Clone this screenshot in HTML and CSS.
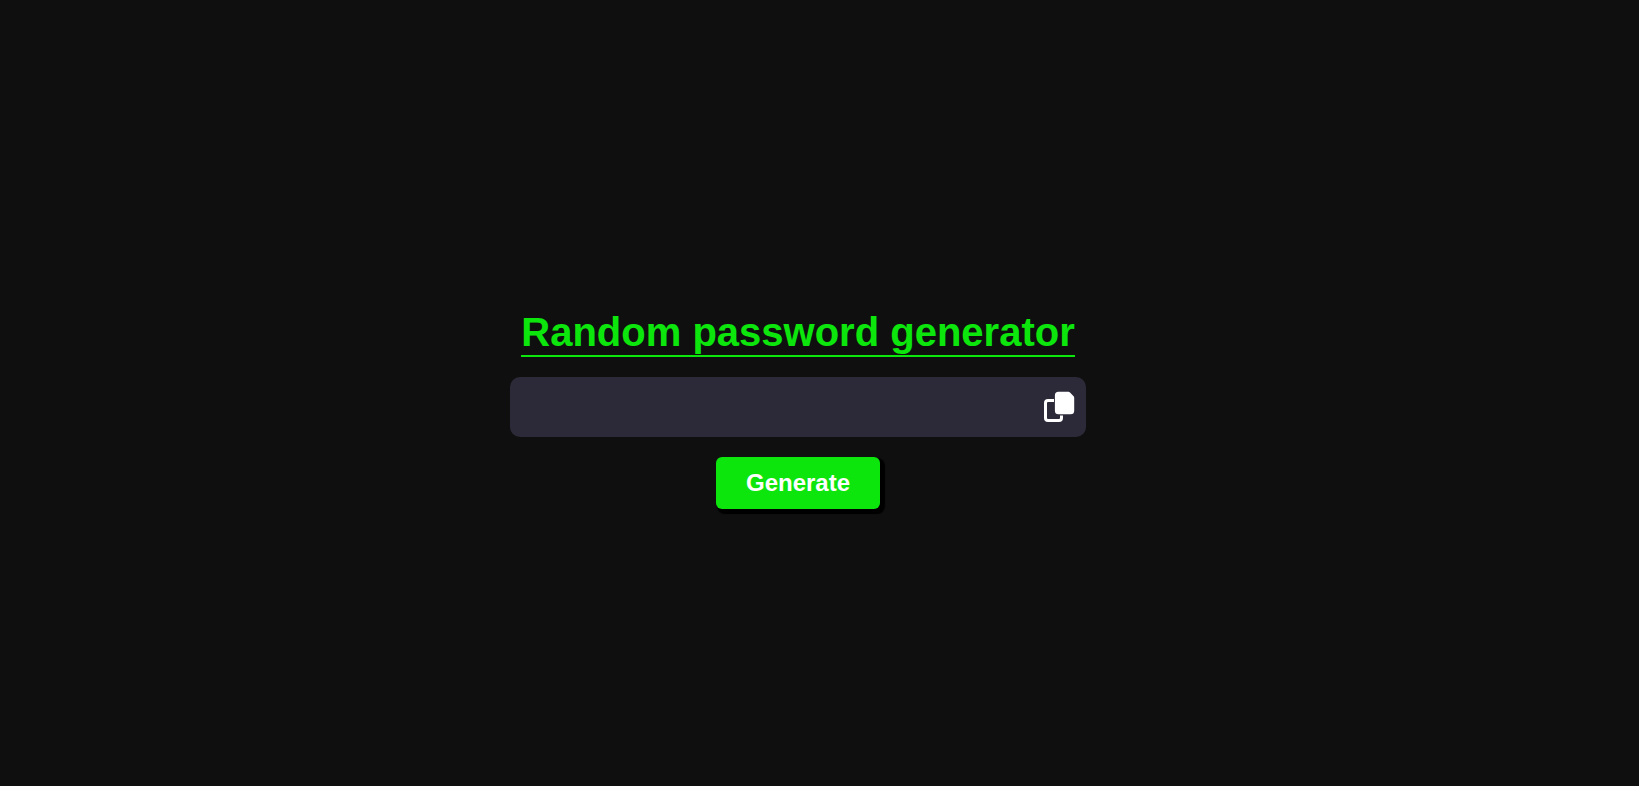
FILE: index.html
```html
<!DOCTYPE html>
<html lang="en">
<head>
<meta charset="utf-8">
<meta name="viewport" content="width=device-width, initial-scale=1">
<title>Random password generator</title>
<link rel="stylesheet" href="styles.css">
</head>
<body>
<main class="generator">
  <h1 class="title">Random password generator</h1>
  <div class="field">
    <input class="password" type="text" aria-label="Generated password" readonly>
    <button class="copy" type="button" aria-label="Copy password">
      <svg class="copy-icon" viewBox="0 0 32 32" aria-hidden="true">
        <path d="M11 9.500H5Q2.500 9.500 2.500 12V27Q2.500 29.500 5 29.500H16Q18.500 29.500 18.500 27V24.500" fill="none" stroke="currentColor" stroke-width="3"/>
        <path d="M15.500 .8H25.500Q26.300 .8 27 1.500L30.400 4.900Q31.200 5.700 31.200 6.700V19.700Q31.200 23.300 27.600 23.300H15.500Q11.900 23.300 11.900 19.700V4.400Q11.900 .8 15.500 .8Z" fill="currentColor"/>
      </svg>
    </button>
  </div>
  <button class="generate" type="button">Generate</button>
</main>
</body>
</html>
```
FILE: styles.css
```css
* {
  box-sizing: border-box;
}

body {
  margin: 0;
  background: #0f0f0f;
  font-family: Arial, "Liberation Sans", sans-serif;
}

.generator {
  display: flex;
  flex-direction: column;
  align-items: center;
  justify-content: center;
  gap: 20px;
  min-height: 100vh;
  padding: 32px 43px 0 0;
}

.title {
  margin: 0;
  border-bottom: 2px solid #0de60d;
  color: #0de60d;
  font-size: 40px;
  line-height: 46px;
}

.field {
  display: flex;
  align-items: center;
  width: 100%;
  max-width: 576px;
  height: 60px;
  padding: 0 11px;
  border-radius: 10px;
  background: #2c2a38;
}

.password {
  flex: 1;
  min-width: 0;
  height: 100%;
  padding: 0;
  border: 0;
  outline: 0;
  background: transparent;
  color: #fff;
  font: 24px Arial, "Liberation Sans", sans-serif;
}

.copy {
  display: flex;
  padding: 0;
  border: 0;
  background: transparent;
  color: #fff;
  cursor: pointer;
}

.copy-icon {
  width: 32px;
  height: 32px;
}

.generate {
  padding: 12px 30px;
  border: 0;
  border-radius: 6px;
  background: #0de60d;
  box-shadow: 3px 3px 1px 2px #000;
  color: #fff;
  font: bold 24px/28px Arial, "Liberation Sans", sans-serif;
  cursor: pointer;
}
```
